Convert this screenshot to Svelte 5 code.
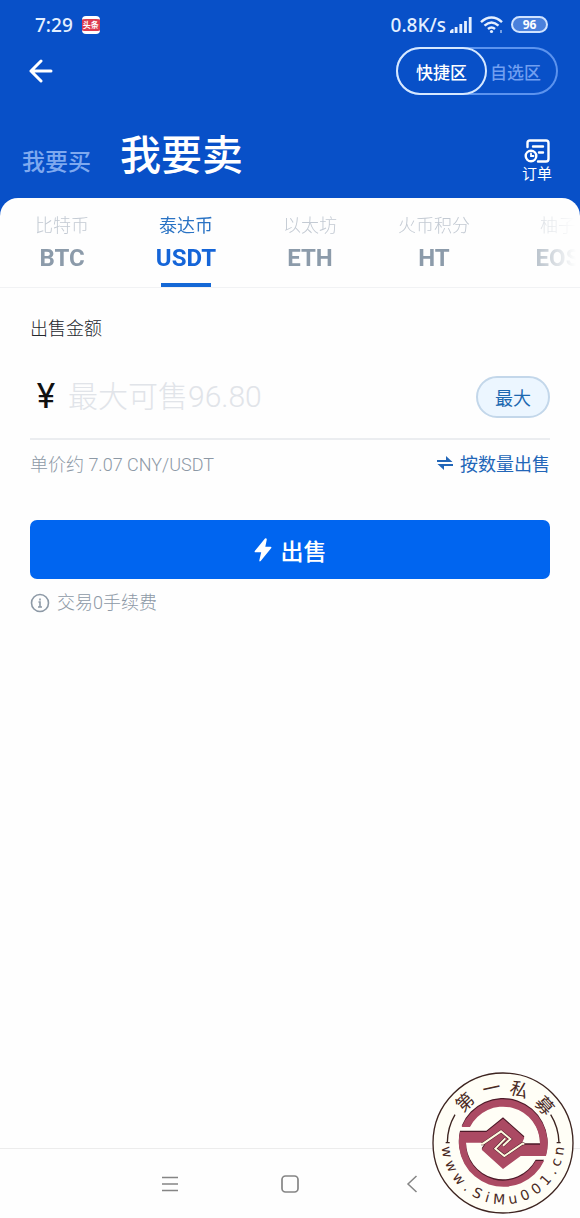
<script lang="ts">
  type Coin = { name: string; symbol: string };
  type SealChar = { char: string; angle: number };

  const coins: Coin[] = [
    { name: '比特币', symbol: 'BTC' },
    { name: '泰达币', symbol: 'USDT' },
    { name: '以太坊', symbol: 'ETH' },
    { name: '火币积分', symbol: 'HT' },
    { name: '柚子', symbol: 'EOS' }
  ];

  // angles are in degrees, clockwise from the top of the seal
  const sealTop: SealChar[] = [
    { char: '第', angle: -43 },
    { char: '一', angle: -12 },
    { char: '私', angle: 17 },
    { char: '募', angle: 48 }
  ];

  // angles are in degrees, counter-clockwise from the bottom of the seal
  const sealBottom: SealChar[] = [
    { char: 'w', angle: -81 },
    { char: 'w', angle: -66 },
    { char: 'w', angle: -51 },
    { char: '.', angle: -39 },
    { char: 'S', angle: -27 },
    { char: 'i', angle: -16 },
    { char: 'M', angle: -4 },
    { char: 'u', angle: 10 },
    { char: '0', angle: 23 },
    { char: '0', angle: 36 },
    { char: '1', angle: 49 },
    { char: '.', angle: 60 },
    { char: 'c', angle: 70 },
    { char: 'n', angle: 82 }
  ];

  let zone = $state('quick');
  let side = $state('sell');
  let active = $state('USDT');
  let amount = $state('');

  const max = '96.80';
</script>

<div class="screen">
  <header class="header">
    <div class="status">
      <span>7:29</span>
      <span class="app-badge">头条</span>
      <span class="speed">0.8K/s</span>
      <svg class="signal" width="22" height="16" viewBox="0 0 22 16" fill="currentColor" aria-hidden="true">
        <path d="M0 16v-2l2-2h1.500v4zM4.700 10h2.800v6H4.700zM9.400 7h2.800v9H9.400zM14.100 4h2.800v12h-2.800zM18.800 0h2.800v16h-2.800z" />
      </svg>
      <svg class="wifi" width="24" height="18" viewBox="0 0 24 18" fill="none" stroke="currentColor" stroke-width="2.400" aria-hidden="true">
        <path d="M1 6.200C7.500 0 15.500 0 22 6.200M4.500 9.700c4.500-4.200 9.500-4.200 14 0M8 13c2.500-2.200 4.500-2.200 7 0" />
        <circle cx="11.500" cy="15.500" r="1.600" fill="currentColor" stroke="none" />
        <path d="M21 14v3" stroke-width="1" />
      </svg>
      <span class="battery">96</span>
    </div>

    <div class="nav">
      <button type="button" class="back" aria-label="返回">
        <svg width="24" height="24" viewBox="0 0 24 24" fill="none" stroke="currentColor" stroke-width="3" stroke-linecap="round" stroke-linejoin="round" aria-hidden="true">
          <path d="M12 2 2 12l10 10M2 12h20" />
        </svg>
      </button>
      <div class="zones">
        <button type="button" class="zone" class:active={zone === 'quick'} onclick={() => (zone = 'quick')}>快捷区</button>
        <button type="button" class="zone" class:active={zone === 'custom'} onclick={() => (zone = 'custom')}>自选区</button>
      </div>
    </div>

    <div class="sides">
      <button type="button" class="side" class:active={side === 'buy'} onclick={() => (side = 'buy')}>我要买</button>
      <button type="button" class="side" class:active={side === 'sell'} onclick={() => (side = 'sell')}>我要卖</button>
      <button type="button" class="orders">
        <svg width="26" height="24" viewBox="0 0 26 24" fill="none" stroke="currentColor" stroke-width="2.400" stroke-linecap="round" aria-hidden="true">
          <path d="M3.500 8V4q0-2.500 2.500-2.500h16q2.500 0 2.500 2.500v16q0 2.500-2.500 2.500h-8M9 7.500h10M15 13.500h4" />
          <circle cx="7" cy="17" r="5.300" />
          <path d="M7 14.500V17h2.500" stroke-width="1.800" />
        </svg>
        <span>订单</span>
      </button>
    </div>
  </header>

  <main class="sheet">
    <div class="tabs-wrap">
      <div class="tabs">
        {#each coins as coin (coin.symbol)}
          <button type="button" class="tab" class:active={active === coin.symbol} onclick={() => (active = coin.symbol)}>
            <span class="tab-name">{coin.name}</span>
            <span class="tab-symbol">{coin.symbol}</span>
          </button>
        {/each}
      </div>
    </div>

    <form class="form" onsubmit={(e) => e.preventDefault()}>
      <label class="label" for="amount">出售金额</label>
      <div class="amount">
        <span class="currency">¥</span>
        <input id="amount" type="text" inputmode="decimal" placeholder="最大可售{max}" bind:value={amount} />
        <button type="button" class="max" onclick={() => (amount = max)}>最大</button>
      </div>
      <div class="rate">
        <span>单价约 7.07 CNY/USDT</span>
        <button type="button" class="switch">
          <svg width="16" height="14" viewBox="0 0 16 14" fill="currentColor" aria-hidden="true">
            <path d="M0 6V4h9V0l6.500 6zM16 8v2H7v4L.5 8z" />
          </svg>
          按数量出售
        </button>
      </div>
      <button type="submit" class="submit">
        <svg width="18" height="24" viewBox="0 0 18 24" fill="currentColor" aria-hidden="true">
          <path d="M11 .5 .8 13q-.6 1.200.7 1.200h5.700L5.300 22.500q.2 1.500 1.400.5L17.300 10q.5-1.200-.8-1.200h-5.200l1.500-7.300Q12.500-.5 11 .5z" />
        </svg>
        出售
      </button>
      <p class="fee">
        <svg width="20" height="20" viewBox="0 0 20 20" fill="none" stroke="currentColor" stroke-width="1.600" aria-hidden="true">
          <circle cx="10" cy="10" r="8.500" />
          <path d="M8.500 9H10v5M8 14h4M10 5.500v2" />
        </svg>
        交易0手续费
      </p>
    </form>
  </main>

  <nav class="system">
    <button type="button" aria-label="菜单">
      <svg width="18" height="18" viewBox="0 0 18 18" fill="none" stroke="currentColor" stroke-width="1.500" aria-hidden="true">
        <path d="M1 2.500h16M1 9h16M1 15.500h16" />
      </svg>
    </button>
    <button type="button" aria-label="主页">
      <svg width="18" height="18" viewBox="0 0 18 18" fill="none" stroke="currentColor" stroke-width="1.700" aria-hidden="true">
        <rect x="1" y="1" width="16" height="16" rx="3.500" />
      </svg>
    </button>
    <button type="button" aria-label="后退">
      <svg width="18" height="18" viewBox="0 0 18 18" fill="none" stroke="currentColor" stroke-width="1.500" aria-hidden="true">
        <path d="M15.500 1 7 9l8.500 8" />
      </svg>
    </button>
  </nav>

  <svg class="seal" width="142" height="142" viewBox="37 35 426 426" role="img" aria-label="第一私募">
    <defs>
      <g id="seal-mark">
        <path d="M126 200A134 134 0 0 1 379 287H303L250 326 186 268 200 247 250 210 300 253H361A111 111 0 0 0 151 200Z" />
        <path d="M121 215H200L250 175 314 232 305 253 250 290 190 247H139A111 111 0 0 0 348 302H373A134 134 0 0 1 121 215Z" />
      </g>
    </defs>
    <circle cx="250" cy="248" r="210" fill="#fffef5" fill-opacity="0.95" stroke="#3d2420" stroke-width="4" />
    <path d="M83 247A167 167 0 0 1 106 163M393 163A167 167 0 0 1 418 247M78 247h12M411 247h12" fill="none" stroke="#3d2420" stroke-width="4" />
    <use href="#seal-mark" y="-4" fill="#4d1a28" />
    <use href="#seal-mark" fill="#ab4a63" />
    <path d="M184 250H190L244 213 272 236 250 256M314 250H308L254 287 227 265 257 234" fill="none" stroke="#4d1a28" stroke-width="9" />
    <path d="M184 250H190L244 213 272 236 250 256M314 250H308L254 287 227 265 257 234" fill="none" stroke="#fffbe0" stroke-width="6" />
    {#each sealTop as { char, angle }}
      <text class="seal-cjk" x="250" y="100" transform="rotate({angle} 250 248)">{char}</text>
    {/each}
    {#each sealBottom as { char, angle }}
      <text class="seal-latin" x="250" y="432" transform="rotate({-angle} 250 248)">{char}</text>
    {/each}
  </svg>
</div>

<style>
  :global(body) {
    margin: 0;
    background: #fefefe;
  }

  .screen {
    position: relative;
    display: flex;
    flex-direction: column;
    min-height: 100vh;
    overflow: hidden;
    background: #0850c8;
    font-family: Roboto, "Noto Sans CJK SC", sans-serif;
  }

  button {
    padding: 0;
    border: none;
    background: transparent;
    color: inherit;
    font: inherit;
    cursor: pointer;
  }

  svg {
    display: block;
    flex-shrink: 0;
  }

  .header {
    color: #fff;
  }

  .status {
    box-sizing: border-box;
    display: flex;
    align-items: center;
    height: 47px;
    padding: 2px 32px 0 35px;
    color: #e4efff;
    font: 500 19px/24px "Noto Sans", "Noto Sans CJK SC", sans-serif;
  }

  .app-badge {
    margin-left: 9px;
    width: 18px;
    border: solid #fff;
    border-width: 3px 0;
    border-radius: 4px;
    background: #dc3c50;
    color: #fff;
    font-size: 8px;
    font-weight: 700;
    line-height: 12px;
    text-align: center;
  }

  .speed {
    margin-left: auto;
  }

  .signal {
    margin-left: 4px;
  }

  .wifi {
    margin-left: 8px;
  }

  .battery {
    box-sizing: border-box;
    margin-left: 7px;
    width: 37px;
    border: 2px solid #cfe2ff;
    border-radius: 9px;
    background: #4a80dc;
    color: #fff;
    font-size: 12px;
    font-weight: 700;
    line-height: 13px;
    text-align: center;
  }

  .nav {
    display: flex;
    align-items: center;
    justify-content: space-between;
    padding: 0 22px 0 29px;
  }

  .zones {
    display: flex;
    border-radius: 24px;
    box-shadow: inset 0 0 0 2px #5c93ee;
  }

  .zone {
    box-sizing: border-box;
    height: 48px;
    padding: 0 15px 0 1px;
    border: 2px solid transparent;
    border-radius: 24px;
    color: #719ff0;
    font-size: 17px;
    font-weight: 500;
  }

  .zone.active {
    padding: 0 18px;
    border-color: #d6e8ff;
    color: #fff;
  }

  .sides {
    display: flex;
    align-items: center;
    gap: 29px;
    height: 60px;
    padding: 31px 28px 12px 22px;
  }

  .side {
    padding-top: 14px;
    color: #7fa9ef;
    font-size: 23px;
    font-weight: 500;
    line-height: 30px;
  }

  .side.active {
    padding-top: 0;
    color: #fff;
    font-size: 41px;
    line-height: 60px;
  }

  .orders {
    display: flex;
    flex-direction: column;
    align-items: center;
    margin-left: auto;
    padding-top: 12px;
    font-size: 15px;
    line-height: 22px;
  }

  .sheet {
    flex: 1;
    border-radius: 18px 18px 0 0;
    background: #fefefe;
    overflow: hidden;
  }

  .tabs-wrap {
    border-bottom: 1px solid #f1f2f4;
  }

  .tabs {
    display: flex;
    overflow: hidden;
    mask-image: linear-gradient(to right, #000 calc(100% - 70px), transparent calc(100% - 4px));
  }

  .tab {
    position: relative;
    display: flex;
    flex: 0 0 124px;
    flex-direction: column;
    align-items: center;
    height: 89px;
    padding-top: 16px;
    color: #8c9baa;
  }

  .tab-name {
    color: #c3cad3;
    font-size: 18px;
    font-weight: 300;
    line-height: 24px;
  }

  .tab-symbol {
    font-size: 24px;
    font-weight: 700;
    line-height: 40px;
  }

  .tab.active {
    color: #1565d8;
  }

  .tab.active .tab-name {
    color: #2a73c4;
    font-weight: 400;
  }

  .tab.active::after {
    content: '';
    position: absolute;
    bottom: 0;
    left: 37px;
    width: 50px;
    height: 4px;
    background: #1468d6;
  }

  .form {
    display: flex;
    flex-direction: column;
    padding: 28px 30px;
  }

  .label {
    color: #22262c;
    font-size: 18px;
    font-weight: 300;
    line-height: 26px;
  }

  .amount {
    box-sizing: border-box;
    display: flex;
    align-items: center;
    height: 98px;
    padding-top: 14px;
    border-bottom: 2px solid #ebedf0;
  }

  .currency {
    width: 32px;
    color: #111;
    font-size: 35px;
    line-height: 40px;
    text-align: center;
  }

  .amount input {
    flex: 1;
    min-width: 0;
    padding: 0 0 0 6px;
    border: none;
    outline: none;
    background: transparent;
    color: #111;
    font: 300 30px/40px Roboto, "Noto Sans CJK SC", sans-serif;
  }

  .amount input::placeholder {
    color: #e1e4e9;
    opacity: 1;
  }

  .max {
    box-sizing: border-box;
    width: 74px;
    height: 42px;
    border: 2px solid #c3d7ea;
    border-radius: 21px;
    background: #ecf6ff;
    color: #1c68b0;
    font-size: 18px;
  }

  .rate {
    display: flex;
    align-items: center;
    justify-content: space-between;
    height: 46px;
    color: #8d99a6;
    font-size: 18px;
    font-weight: 300;
  }

  .switch {
    display: flex;
    align-items: center;
    gap: 7px;
    color: #2266b8;
    font-weight: 400;
  }

  .submit {
    display: flex;
    align-items: center;
    justify-content: center;
    gap: 9px;
    height: 59px;
    margin-top: 34px;
    border-radius: 7px;
    background: #0065f0;
    color: #fff;
    font-size: 23px;
    font-weight: 500;
  }

  .fee {
    display: flex;
    align-items: center;
    gap: 7px;
    margin: 11px 0 0;
    color: #8d99a6;
    font-size: 18px;
    font-weight: 300;
    line-height: 26px;
  }

  .system {
    display: flex;
    align-items: center;
    justify-content: center;
    gap: 102px;
    height: 69px;
    border-top: 1px solid #ececec;
    background: #fefefe;
    color: #858585;
  }

  /* watermark over the bottom right corner */
  .seal {
    position: absolute;
    right: 6px;
    bottom: 4px;
  }

  .seal-cjk,
  .seal-latin {
    fill: #4a2a24;
    text-anchor: middle;
  }

  .seal-cjk {
    font: 400 54px "Noto Sans CJK SC", sans-serif;
  }

  .seal-latin {
    font: 400 42px "DejaVu Sans", sans-serif;
  }
</style>
